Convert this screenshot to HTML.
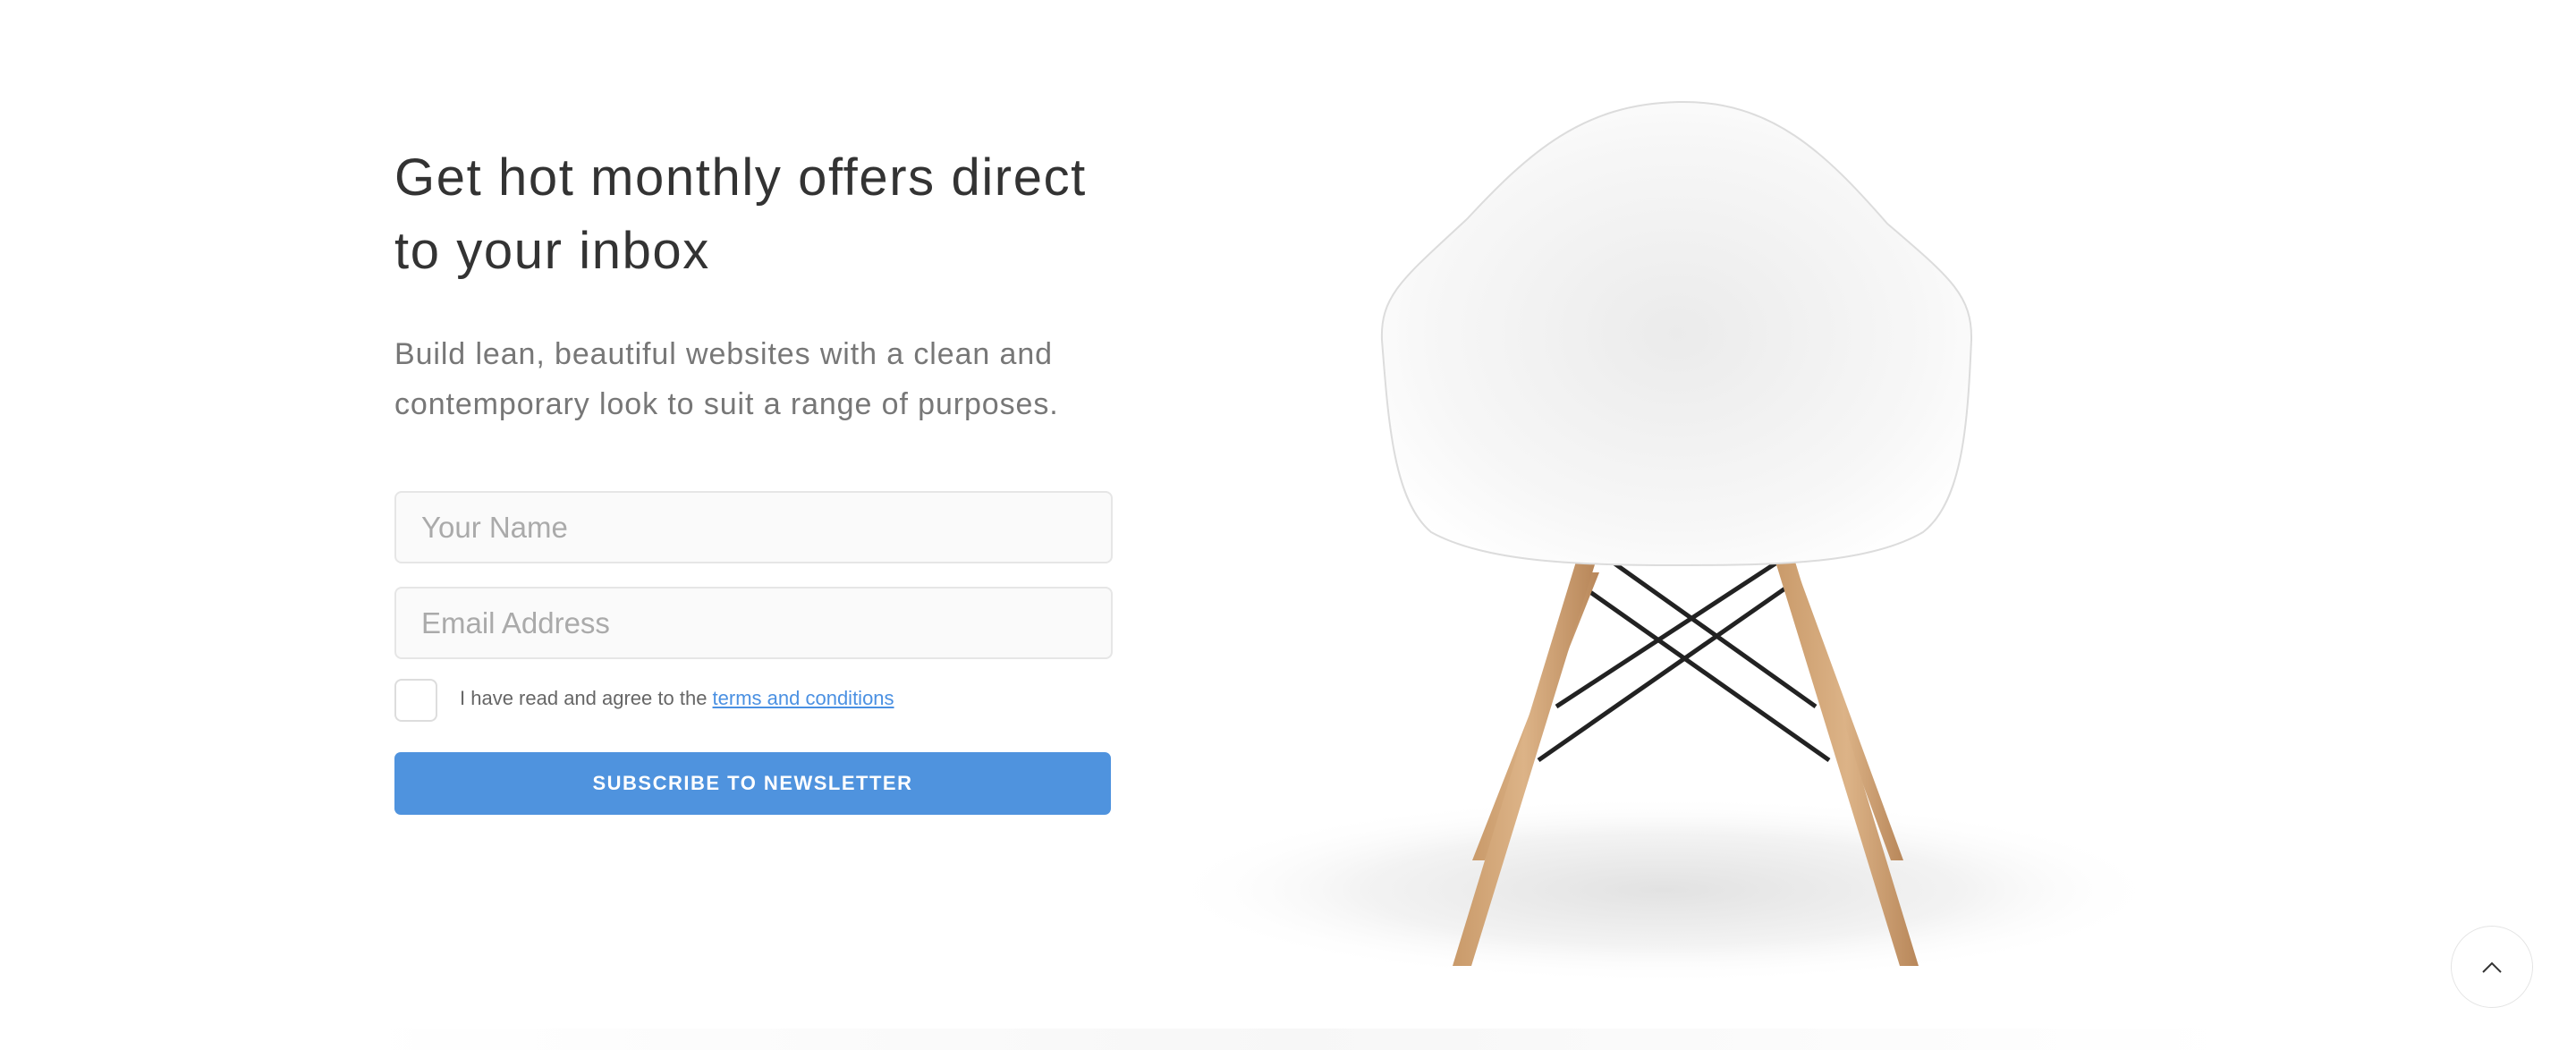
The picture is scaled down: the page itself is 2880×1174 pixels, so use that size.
<!DOCTYPE html>
<html><head><meta charset="utf-8"><style>
html,body{margin:0;padding:0;width:2880px;height:1174px;background:#fff;overflow:hidden;font-family:"Liberation Sans",sans-serif;position:relative}
h1{position:absolute;left:441px;top:158px;margin:0;font-weight:300;font-size:58px;line-height:82px;color:#333;width:1300px;letter-spacing:1.6px}
p.lead{position:absolute;left:441px;top:368px;margin:0;font-size:34px;line-height:56px;color:#777;width:1000px;letter-spacing:0.9px}
.inp{position:absolute;left:441px;width:799px;height:77px;border:2px solid #e6e6e6;border-radius:8px;background:#fafafa;box-sizing:content-box}
.inp span{position:absolute;left:28px;top:20px;font-size:33px;color:#aaa}
.cb{position:absolute;left:441px;top:759px;width:44px;height:44px;border:2px solid #ddd;border-radius:8px}
.agree{position:absolute;left:514px;top:768px;font-size:22px;color:#666}
.agree a{color:#4a90e2;text-decoration:underline}
.btn{position:absolute;left:441px;top:841px;width:801px;height:70px;background:#4f93de;border-radius:7px;color:#fff;font-weight:bold;font-size:22px;letter-spacing:1.5px;text-align:center;line-height:70px}
.top{position:absolute;left:2740px;top:1035px;width:90px;height:90px;border-radius:50%;border:1px solid #e4e4e4;background:#fff}
</style></head><body>
<svg style="position:absolute;left:0;top:0" width="2880" height="1174">
<defs>
<radialGradient id="sh" cx="0.5" cy="0.5" r="0.5"><stop offset="0" stop-color="#e2e2e2"/><stop offset="0.6" stop-color="#f3f3f3"/><stop offset="1" stop-color="#fff" stop-opacity="0"/></radialGradient>
<radialGradient id="seat" cx="0.5" cy="0.5" r="0.6"><stop offset="0" stop-color="#ebebeb"/><stop offset="0.7" stop-color="#f7f7f7"/><stop offset="1" stop-color="#fff"/></radialGradient>
<linearGradient id="wood" x1="0" x2="1"><stop offset="0" stop-color="#c99a6a"/><stop offset="0.5" stop-color="#dcb387"/><stop offset="1" stop-color="#b8875a"/></linearGradient>
<linearGradient id="band" x1="0" x2="1"><stop offset="0" stop-color="#fff"/><stop offset="0.5" stop-color="#f7f7f7"/><stop offset="1" stop-color="#fff"/></linearGradient>
</defs>
<rect x="400" y="1150" width="2100" height="24" fill="url(#band)"/>
<ellipse cx="1860" cy="995" rx="560" ry="105" fill="url(#sh)"/>
<g stroke="#222" stroke-width="5">
<line x1="1805" y1="630" x2="2030" y2="790"/><line x1="1985" y1="630" x2="1740" y2="790"/>
<line x1="1775" y1="660" x2="2045" y2="850"/><line x1="2000" y1="655" x2="1720" y2="850"/>
</g>
<path d="M1772,640 L1788,640 L1660,962 L1646,962 Z" fill="url(#wood)"/>
<path d="M1996,640 L2010,640 L2128,962 L2114,962 Z" fill="url(#wood)"/>
<path d="M1762,628 L1784,628 L1645,1080 L1624,1080 Z" fill="url(#wood)"/>
<path d="M1985,628 L2007,628 L2145,1080 L2124,1080 Z" fill="url(#wood)"/>
<path d="M1877,114 C1980,112 2040,170 2110,250 C2180,310 2205,330 2204,380 C2200,470 2195,560 2150,595 C2090,630 1990,632 1877,632 C1760,632 1660,628 1600,595 C1558,560 1552,470 1545,380 C1543,330 1570,310 1640,245 C1710,170 1770,116 1877,114 Z" fill="url(#seat)" stroke="#dcdcdc" stroke-width="2"/>
</svg>
<h1>Get hot monthly offers direct<br>to your inbox</h1>
<p class="lead">Build lean, beautiful websites with a clean and<br>contemporary look to suit a range of purposes.</p>
<div class="inp" style="top:549px"><span>Your Name</span></div>
<div class="inp" style="top:656px"><span>Email Address</span></div>
<div class="cb"></div>
<div class="agree">I have read and agree to the <a>terms and conditions</a></div>
<div class="btn">SUBSCRIBE TO NEWSLETTER</div>
<div class="top"><svg width="90" height="90"><path d="M35,51 L45,41 L55,51" fill="none" stroke="#333" stroke-width="2"/></svg></div>
</body></html>
